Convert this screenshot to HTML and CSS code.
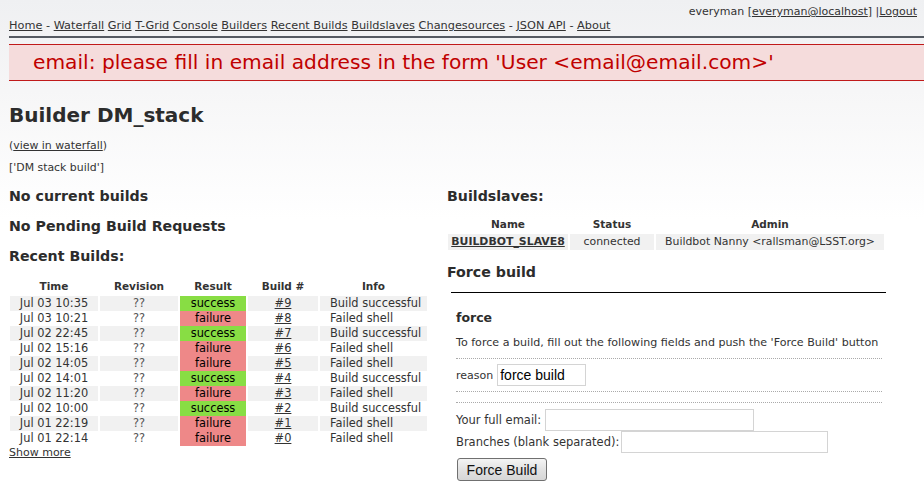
FILE: index.html
```html
<!DOCTYPE html>
<html>
<head>
<meta charset="utf-8">
<link rel="stylesheet" href="styles.css">
</head>
<body>
<div class="header">
  <div class="auth">everyman [<a href="#">everyman@localhost</a>] |<a href="#">Logout</a></div>
  <div class="nav"><a href="#">Home</a> - <a href="#">Waterfall</a> <a href="#">Grid</a> <a href="#">T-Grid</a> <a href="#">Console</a> <a href="#">Builders</a> <a href="#">Recent Builds</a> <a href="#">Buildslaves</a> <a href="#">Changesources</a> - <a href="#">JSON API</a> - <a href="#">About</a></div>
</div>
<div class="alert">email: please fill in email address in the form 'User &lt;email@email.com&gt;'</div>
<div class="content">
  <h1 class="title">Builder DM_stack</h1>
  <p class="small">(<a href="#">view in waterfall</a>)</p>
  <p class="small">['DM stack build']</p>
  <div class="columns">
    <div class="col-left">
      <h2>No current builds</h2>
      <h2>No Pending Build Requests</h2>
      <h2>Recent Builds:</h2>
      <table class="info builds">
        <tr><th class="c-time">Time</th><th class="c-rev">Revision</th><th class="c-res">Result</th><th class="c-num">Build #</th><th class="c-info">Info</th></tr>
        <tr class="alt"><td>Jul 03 10:35</td><td class="rev">??</td><td class="success">success</td><td><a href="#">#9</a></td><td class="left">Build successful</td></tr>
        <tr><td>Jul 03 10:21</td><td class="rev">??</td><td class="failure">failure</td><td><a href="#">#8</a></td><td class="left">Failed shell</td></tr>
        <tr class="alt"><td>Jul 02 22:45</td><td class="rev">??</td><td class="success">success</td><td><a href="#">#7</a></td><td class="left">Build successful</td></tr>
        <tr><td>Jul 02 15:16</td><td class="rev">??</td><td class="failure">failure</td><td><a href="#">#6</a></td><td class="left">Failed shell</td></tr>
        <tr class="alt"><td>Jul 02 14:05</td><td class="rev">??</td><td class="failure">failure</td><td><a href="#">#5</a></td><td class="left">Failed shell</td></tr>
        <tr><td>Jul 02 14:01</td><td class="rev">??</td><td class="success">success</td><td><a href="#">#4</a></td><td class="left">Build successful</td></tr>
        <tr class="alt"><td>Jul 02 11:20</td><td class="rev">??</td><td class="failure">failure</td><td><a href="#">#3</a></td><td class="left">Failed shell</td></tr>
        <tr><td>Jul 02 10:00</td><td class="rev">??</td><td class="success">success</td><td><a href="#">#2</a></td><td class="left">Build successful</td></tr>
        <tr class="alt"><td>Jul 01 22:19</td><td class="rev">??</td><td class="failure">failure</td><td><a href="#">#1</a></td><td class="left">Failed shell</td></tr>
        <tr><td>Jul 01 22:14</td><td class="rev">??</td><td class="failure">failure</td><td><a href="#">#0</a></td><td class="left">Failed shell</td></tr>
      </table>
      <a class="more" href="#">Show more</a>
    </div>
    <div class="col-right">
      <h2>Buildslaves:</h2>
      <table class="info slaves">
        <tr><th class="s-name">Name</th><th class="s-status">Status</th><th class="s-admin">Admin</th></tr>
        <tr class="alt"><td><a class="slave" href="#">BUILDBOT_SLAVE8</a></td><td>connected</td><td>Buildbot Nanny &lt;rallsman@LSST.org&gt;</td></tr>
      </table>
      <h2 class="force-title">Force build</h2>
      <div class="force">
        <h3>force</h3>
        <p class="desc">To force a build, fill out the following fields and push the 'Force Build' button</p>
        <div class="field reason"><span class="tiny">reason</span><input class="txt-reason" type="text" value="force build"></div>
        <div class="field-sep"></div>
        <div class="field"><span>Your full email:</span><input class="txt-email" type="text"></div>
        <div class="field"><span>Branches (blank separated):</span><input class="txt-branch" type="text"></div>
        <button class="btn">Force Build</button>
      </div>
    </div>
  </div>
</div>
</body>
</html>
```
FILE: styles.css
```css
html, body {
  margin: 0;
  padding: 0;
}
body {
  font-family: "DejaVu Sans", Verdana, sans-serif;
  font-size: 11px;
  color: #333;
  background: linear-gradient(#eff0f2 0px, #f6f6f7 90px, #ffffff 220px) no-repeat;
  background-color: #fff;
  min-height: 489px;
}
a { color: #333; }
.header {
  padding: 5px 0 0 0;
  border-bottom: 2px solid #555a62;
  margin-left: 9px;
}
.auth {
  text-align: right;
  font-size: 11px;
  line-height: 14px;
  padding-right: 7px;
}
.nav {
  font-size: 11.3px;
  line-height: 14px;
  padding-bottom: 3px;
}
.alert {
  margin: 6px 0 0 9px;
  border-top: 1px solid #c01a1a;
  border-bottom: 1px solid #c01a1a;
  background: #f5dcdc;
  color: #c00000;
  font-size: 20.2px;
  line-height: 35px;
  padding-left: 24px;
}
.content {
  padding: 0 9px;
}
.title {
  font-size: 20px;
  font-weight: bold;
  margin: 20px 0 0 0;
  line-height: 28px;
  color: #2c2c2c;
}
.small {
  font-size: 10.9px;
  margin: 9px 0 0 0;
  line-height: 16px;
}
.small + .small { margin-top: 6px; }
.columns {
  display: flex;
  gap: 16px;
  margin-top: 5px;
}
.col-left { width: 422px; }
.col-right { flex: 1; }
h2 {
  font-size: 14.2px;
  font-weight: bold;
  margin: 0;
  line-height: 30px;
  color: #2c2c2c;
}
table.info {
  border-spacing: 2px 0;
  border-collapse: separate;
  font-size: 11.4px;
  margin-left: -1px;
}
table.info th {
  font-weight: bold;
  font-size: 10.5px;
  line-height: 16px;
  padding: 0;
}
table.info td {
  line-height: 14px;
  padding: 0;
  text-align: center;
  border-bottom: 1px solid transparent;
}
tr.alt td { background: #f1f1f1; }
td.left { text-align: left !important; padding-left: 10px !important; }
td.rev { color: #555; }
td.success {
  background: #8d4 !important;
  color: #000;
  border-bottom: 1px solid #fff;
}
td.failure {
  background: #e88 !important;
  color: #000;
  border-bottom: 1px solid #fff;
}
table.builds { margin-top: 6px; }
table.builds th { line-height: 19px; }
.c-time { width: 88px; }
.c-rev { width: 78px; }
.c-res { width: 66px; }
.c-num { width: 70px; }
.c-info { width: 107px; }
.more {
  font-size: 11px;
  display: inline-block;
  margin-top: 0;
}
table.slaves { margin-top: 4px; }
table.slaves th { line-height: 19px; }
table.slaves td { font-size: 10.9px; line-height: 15px; }
.s-name { width: 120px; }
.s-status { width: 84px; }
.s-admin { width: 228px; }
.slave { font-weight: bold; }
.force-title { margin-top: 7px; }
.force {
  border-top: 1px solid #000;
  margin: 5px 29px 0 4px;
  padding: 16px 4px 0 5px;
}
.force h3 {
  font-size: 12.5px;
  font-weight: bold;
  margin: 0;
  line-height: 18px;
  color: #2c2c2c;
}
.desc {
  font-size: 11.1px;
  margin: 9px 0 0 0;
  line-height: 14px;
  padding-bottom: 8px;
  border-bottom: 1px dotted #aaa;
  white-space: nowrap;
}
.field {
  display: flex;
  align-items: center;
  font-size: 11.5px;
  gap: 4px;
  height: 22px;
}
.field.reason {
  height: 32px;
  border-bottom: 1px dotted #aaa;
}
.tiny { font-size: 11px; }
.field-sep {
  height: 10px;
  border-bottom: 1px dotted #aaa;
  margin-bottom: 6px;
}
input {
  font-family: "Liberation Sans", Arial, sans-serif;
  border: 1px solid #d4d4d4;
  box-sizing: border-box;
  background: #fff;
  padding: 0 2px;
  margin: 0;
}
.txt-reason { width: 89px; height: 22px; font-size: 14px; color: #000; }
.txt-email { width: 209px; height: 22px; }
.txt-branch { width: 207px; height: 22px; margin-left: -2px; }
.btn {
  font-family: "Liberation Sans", Arial, sans-serif;
  font-size: 14px;
  color: #111;
  width: 90px;
  height: 23px;
  margin: 5px 0 0 1px;
  border: 1px solid #707070;
  border-radius: 3px;
  background: linear-gradient(#f4f4f4, #e2e2e2 50%, #d6d6d6);
  padding: 0;
}
```
